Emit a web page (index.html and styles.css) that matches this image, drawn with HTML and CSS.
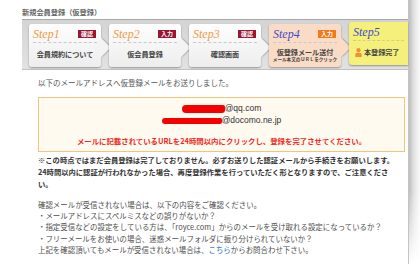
FILE: index.html
```html
<!DOCTYPE html>
<html lang="ja">
<head>
<meta charset="utf-8">
<title>新規会員登録（仮登録）</title>
<link rel="stylesheet" href="styles.css">
</head>
<body>
<div class="wrap">
  <div class="page">
    <h1 class="title">新規会員登録（仮登録）</h1>
    <ol class="steps">
      <li class="step">
        <div class="step-head"><span class="step-no">Step1</span><span class="badge">確認</span></div>
        <div class="step-body">会員規約について</div>
      </li>
      <li class="step">
        <div class="step-head"><span class="step-no">Step2</span><span class="badge">入力</span></div>
        <div class="step-body">仮会員登録</div>
      </li>
      <li class="step">
        <div class="step-head"><span class="step-no">Step3</span><span class="badge">確認</span></div>
        <div class="step-body">確認画面</div>
      </li>
      <li class="step step-current">
        <div class="step-head"><span class="step-no">Step4</span><span class="badge badge-orange">入力</span></div>
        <div class="step-body">
          <span class="body-main">仮登録メール送付</span>
          <span class="body-sub">メール本文のＵＲＬをクリック</span>
        </div>
      </li>
      <li class="step step-last">
        <div class="step-head"><span class="step-no">Step5</span></div>
        <div class="step-body step-body-row">
          <svg class="person" viewBox="0 0 7 9" width="7" height="9" aria-hidden="true">
            <circle cx="3.5" cy="2.2" r="2.1" fill="#f0922f"/>
            <path d="M0.3 9 V6.6 Q0.3 4.7 2.3 4.7 H4.7 Q6.7 4.7 6.7 6.6 V9 Z" fill="#f0922f"/>
          </svg>
          <span>本登録完了</span>
        </div>
      </li>
    </ol>
    <div class="content">
      <p class="lead">以下のメールアドレスへ仮登録メールをお送りしました。</p>
      <div class="mailbox">
        <p class="addr"><span class="redact r1"></span>@qq.com</p>
        <p class="addr"><span class="redact r2"></span>@docomo.ne.jp</p>
        <p class="warn">メールに記載されているURLを24時間以内にクリックし、登録を完了させてください。</p>
      </div>
      <p class="notice">※この時点ではまだ会員登録は完了しておりません。必ずお送りした認証メールから手続きをお願いします。<br>24時間以内に認証が行われなかった場合、再度登録作業を行っていただく形となりますので、ご注意くださ<br>い。</p>
      <div class="help">
        <p>確認メールが受信されない場合は、以下の内容をご確認ください。</p>
        <ul class="checks">
          <li>・メールアドレスにスペルミスなどの誤りがないか？</li>
          <li>・指定受信などの設定をしている方は、「royce.com」からのメールを受け取れる設定になっているか？</li>
          <li>・フリーメールをお使いの場合、迷惑メールフォルダに振り分けられていないか？</li>
        </ul>
        <p>上記を確認頂いてもメールが受信されない場合は、<a class="link" href="#">こちら</a>からお問合わせ下さい。</p>
      </div>
    </div>
  </div>
  <div class="edge"></div>
</div>
</body>
</html>
```
FILE: styles.css
```css
* { box-sizing: border-box; }
html, body { margin: 0; padding: 0; background: #fff; }
body { font-family: "Noto Sans CJK JP", "Noto Sans", sans-serif; }

.wrap { display: flex; height: 264px; overflow: hidden; }
.page { width: 409px; flex: none; border-right: 1px solid #c4c4c4; background: #fff; }
.edge {
  flex: 1;
  background: linear-gradient(to right, #bdbdbd, #e2e2e2 45%, #fafafa);
  -webkit-mask-image: linear-gradient(to bottom, #000 72%, transparent 100%);
  mask-image: linear-gradient(to bottom, #000 72%, transparent 100%);
}

.title {
  margin: 0;
  height: 19px;
  padding: 7px 0 0 22px;
  font-size: 7.2px;
  line-height: 10px;
  font-weight: bold;
  color: #666;
}

.steps {
  display: flex;
  gap: 8px;
  margin: 0 0 0 22px;
  padding: 4px 0 2px 7px;
  list-style: none;
  background: linear-gradient(#d4d4d4, #e2e2e2);
  border-top: 1px solid #a8a8a8;
  border-bottom: 1px solid #c2c2c2;
}
.step {
  position: relative;
  width: 72px;
  height: 43px;
  flex: none;
  border-radius: 3px;
  background: linear-gradient(#fefefe, #ededed);
  box-shadow: 0 1px 2px rgba(0, 0, 0, 0.35);
  display: flex;
  flex-direction: column;
}
.step::after {
  content: "";
  position: absolute;
  right: -7px;
  top: 17px;
  width: 13px;
  height: 13px;
  background: #f3f3f3;
  transform: rotate(45deg);
  box-shadow: 1px -1px 1px rgba(0, 0, 0, 0.22);
}
.step-current { background: #f9dbc6; }
.step-current::after { background: #f9dbc6; }
.step-last {
  flex: 1;
  width: auto;
  margin-top: -2px;
  border-radius: 3px 0 0 3px;
  background: #f5f07c;
}
.step-last::after { display: none; }

.step-head {
  height: 19px;
  margin: 0 4px;
  padding-top: 2px;
  border-bottom: 1px dashed #cacaca;
  display: flex;
  justify-content: space-between;
  align-items: center;
}
.step-last .step-head { border-bottom-color: #d9d46a; }
.step-no {
  font-family: "Liberation Serif", serif;
  font-style: italic;
  font-size: 12px;
  line-height: 12px;
  color: #f29a3e;
}
.step-current .step-no, .step-last .step-no { color: #3d4cc6; }
.badge {
  margin-right: 1px;
  padding: 0 3px;
  font-size: 6px;
  line-height: 8px;
  font-weight: bold;
  color: #fff;
  background: #9a1631;
}
.badge-orange { background: #f07a1c; }

.step-body {
  flex: 1;
  display: flex;
  flex-direction: column;
  align-items: center;
  justify-content: center;
  padding-bottom: 1px;
  font-size: 7.1px;
  line-height: 9px;
  font-weight: bold;
  color: #444;
}
.body-main { line-height: 8px; }
.body-sub { font-size: 4.6px; line-height: 6px; }
.step-body-row {
  flex-direction: row;
  justify-content: flex-start;
  gap: 2px;
  padding-left: 6px;
}
.person { display: block; }

.content { padding: 7px 3px 0 38px; }
.lead {
  margin: 0;
  font-size: 7.5px;
  line-height: 12px;
  color: #555;
}
.mailbox {
  margin-top: 8px;
  height: 55px;
  padding: 4px 0;
  border: 1px solid #f3c47e;
  background: #fffaf0;
  text-align: center;
}
.addr {
  margin: 0;
  font-family: "Liberation Sans", sans-serif;
  font-size: 8.5px;
  line-height: 12px;
  color: #333;
}
.redact {
  display: inline-block;
  vertical-align: middle;
  background: #f40000;
  border-radius: 4px 2px 3px 4px;
}
.r1 { width: 43px; height: 8px; }
.r2 { width: 60px; height: 6px; }
.warn {
  margin: 9px 0 0;
  font-size: 7.4px;
  line-height: 12px;
  font-weight: bold;
  color: #ee2a24;
}
.notice {
  margin: 2px 0 0;
  font-size: 7.3px;
  line-height: 12px;
  font-weight: bold;
  color: #333;
}
.help {
  margin-top: 9px;
  font-size: 7.45px;
  line-height: 11.2px;
  color: #4d4d4d;
}
.help p { margin: 0; }
.checks { margin: 0; padding: 0; list-style: none; }
.link { color: #2a6fc0; text-decoration: none; }
```
